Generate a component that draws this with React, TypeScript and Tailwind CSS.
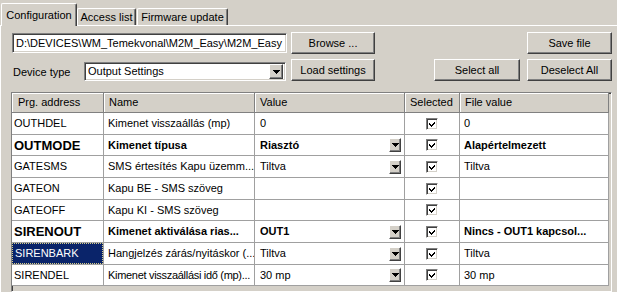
import React from "react";

const raised =
  "border border-t-white border-l-white border-r-[#404040] border-b-[#404040] shadow-[inset_-1px_-1px_0_#808080] bg-[#d4d0c8]";
const sunken =
  "border border-t-[#808080] border-l-[#808080] border-r-white border-b-white shadow-[inset_1px_1px_0_#404040,inset_-1px_-1px_0_#d4d0c8]";

type Row = {
  addr: string;
  name: string;
  value: string;
  drop: boolean;
  file: string;
  bold?: boolean;
  selected?: boolean;
  tight?: boolean;
};

const rows: Row[] = [
  { addr: "OUTHDEL", name: "Kimenet visszaállás (mp)", value: "0", drop: false, file: "0" },
  { addr: "OUTMODE", name: "Kimenet típusa", value: "Riasztó", drop: true, file: "Alapértelmezett", bold: true },
  { addr: "GATESMS", name: "SMS értesítés Kapu üzemm...", value: "Tiltva", drop: true, file: "Tiltva" },
  { addr: "GATEON", name: "Kapu BE - SMS szöveg", value: "", drop: false, file: "" },
  { addr: "GATEOFF", name: "Kapu KI - SMS szöveg", value: "", drop: false, file: "" },
  { addr: "SIRENOUT", name: "Kimenet aktiválása rias...", value: "OUT1", drop: true, file: "Nincs - OUT1 kapcsol...", bold: true },
  { addr: "SIRENBARK", name: "Hangjelzés zárás/nyitáskor (...", value: "Tiltva", drop: true, file: "Tiltva", selected: true },
  { addr: "SIRENDEL", name: "Kimenet visszaállási idő (mp)...", value: "30 mp", drop: true, file: "30 mp", tight: true },
];

const rowHeights = [22, 21, 22, 22, 21, 22, 22, 21];

function DropButton({ w = 12, h = 14 }: { w?: number; h?: number }) {
  return (
    <div
      className={`${raised} flex items-center justify-center shrink-0`}
      style={{ width: w, height: h }}
    >
      <svg width="7" height="4" viewBox="0 0 7 4" shapeRendering="crispEdges">
        <path d="M0 0H7L3.5 4Z" fill="#000" />
      </svg>
    </div>
  );
}

function CheckBox() {
  return (
    <div className={`${sunken} bg-white w-[12px] h-[12px] flex items-center justify-center`}>
      <svg width="8" height="8" viewBox="0 0 8 8" shapeRendering="crispEdges">
        <path
          d="M1 3h1v1h1v1h1V4h1V3h1V2h1v1h0v1h-1v1h-1v1h-1v1h-1V6h-1V5H1Z"
          fill="#000"
        />
      </svg>
    </div>
  );
}

export default function App() {
  return (
    <div
      className="w-[617px] h-[292px] bg-[#d4d0c8] overflow-hidden text-[11px] text-black leading-none"
      style={{ fontFamily: '"Liberation Sans", Arial, sans-serif' }}
    >
      {/* Tabs */}
      <div className="flex items-end h-[25px] pl-[1px]">
        <div className="relative z-10 -mb-[1px] h-[23px] w-[76px] bg-[#d4d0c8] border-l border-t border-white border-r border-r-[#404040] shadow-[inset_-1px_0_0_#808080] rounded-t-[2px] flex flex-col items-center pt-[6px]">
          <span>Configuration</span>
          <span className="mt-[5px] w-[3px] h-[1px] bg-[#404040]" />
        </div>
        <div className="h-[17px] w-[59px] border-l border-t border-white border-r border-r-[#404040] shadow-[inset_-1px_0_0_#808080] rounded-t-[2px] flex items-center justify-center pt-[1px]">
          Access list
        </div>
        <div className="h-[17px] w-[91px] ml-[1px] border-l border-t border-white border-r border-r-[#404040] shadow-[inset_-1px_0_0_#808080] rounded-t-[2px] flex items-center justify-center pt-[1px]">
          Firmware update
        </div>
      </div>

      {/* Panel */}
      <div className="border-t border-l border-white h-[267px] flex flex-col">
        {/* Row 1 */}
        <div className="flex mt-[6px] h-[22px]">
          <div className={`${sunken} bg-white ml-[11px] mt-[1px] w-[275px] h-[20px] overflow-hidden whitespace-nowrap flex items-center pl-[3px]`}>
            D:\DEVICES\WM_Temekvonal\M2M_Easy\M2M_Easy
          </div>
          <div className={`${raised} ml-[4px] w-[84px] h-[22px] flex items-center justify-center`}>
            Browse ...
          </div>
          <div className={`${raised} ml-[152px] w-[85px] h-[22px] flex items-center justify-center`}>
            Save file
          </div>
        </div>

        {/* Row 2 */}
        <div className="flex mt-[5px] h-[22px]">
          <div className="ml-[12px] w-[71px] flex items-center pt-[4px]">Device type</div>
          <div className={`${sunken} bg-white mt-[3px] w-[202px] h-[19px] flex items-center pl-[3px] pr-[2px]`}>
            <span className="flex-1">Output Settings</span>
            <DropButton w={14} h={15} />
          </div>
          <div className={`${raised} ml-[5px] w-[84px] h-[22px] flex items-center justify-center`}>
            Load settings
          </div>
          <div className={`${raised} ml-[59px] w-[86px] h-[22px] flex items-center justify-center`}>
            Select all
          </div>
          <div className={`${raised} ml-[7px] w-[85px] h-[22px] flex items-center justify-center`}>
            Deselect All
          </div>
        </div>

        {/* Grid */}
        <div className={`${sunken} ml-[10px] mt-[11px] w-[601px] h-[200px] bg-[#d4d0c8] overflow-hidden`}>
          <div className="grid grid-cols-[92px_151px_150px_55px_149px]">
            {["Prg. address", "Name", "Value", "Selected", "File value"].map((h, i) => (
              <div
                key={h}
                className={`h-[20px] flex items-center border-r border-b border-[#808080] shadow-[inset_1px_1px_0_#fff] ${
                  i === 0 ? "pl-[6px]" : "pl-[5px]"
                }`}
              >
                {h}
              </div>
            ))}
            {rows.map((r, ri) => {
              const h = rowHeights[ri];
              const cell = "bg-white border-r border-b border-[#a0a0a0] flex items-center whitespace-nowrap overflow-hidden";
              return (
                <React.Fragment key={r.addr}>
                  <div className={`${cell} ${r.selected ? "p-0" : "pl-[2px]"}`} style={{ height: h }}>
                    {r.selected ? (
                      <div className="w-full h-full bg-[#0a246a] text-white border border-dotted border-[#d8cf8a] flex items-center pl-[2px]">
                        {r.addr}
                      </div>
                    ) : (
                      <span className={r.bold ? "font-bold text-[13px]" : ""}>{r.addr}</span>
                    )}
                  </div>
                  <div
                    className={`${cell} pl-[4px] ${r.bold ? "font-bold" : ""} ${r.tight ? "tracking-[-0.3px]" : ""}`}
                    style={{ height: h }}
                  >
                    {r.name}
                  </div>
                  <div className={`${cell} pl-[5px] pr-[3px] ${r.bold ? "font-bold" : ""}`} style={{ height: h }}>
                    <span className="flex-1">{r.value}</span>
                    {r.drop && <DropButton />}
                  </div>
                  <div className={`${cell} justify-center pr-[1px]`} style={{ height: h }}>
                    <CheckBox />
                  </div>
                  <div className={`${cell} pl-[4px] ${r.bold ? "font-bold" : ""}`} style={{ height: h }}>
                    {r.file}
                  </div>
                </React.Fragment>
              );
            })}
          </div>
        </div>
      </div>
    </div>
  );
}
